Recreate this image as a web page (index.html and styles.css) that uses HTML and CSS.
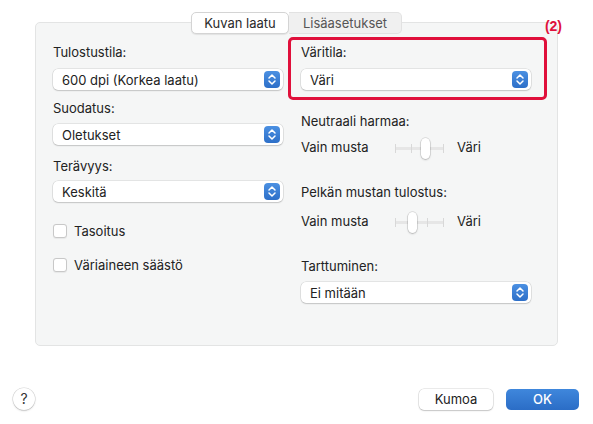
FILE: index.html
```html
<!DOCTYPE html>
<html lang="fi">
<head>
<meta charset="utf-8">
<link rel="stylesheet" href="styles.css">
</head>
<body>
<div class="dialog">
  <div class="tabs">
    <div class="tab active">Kuvan laatu</div>
    <div class="tab">Lisäasetukset</div>
  </div>
  <div class="panel">
    <div class="col left">
      <div class="label first">Tulostustila:</div>
      <div class="select s1"><span>600 dpi (Korkea laatu)</span><span class="stepper"><svg viewBox="0 0 16 17" width="16" height="17"><path d="M5 7 L8 4 L11 7 M5 10 L8 13 L11 10" fill="none" stroke="#fff" stroke-width="1.5" stroke-linecap="round" stroke-linejoin="round"/></svg></span></div>
      <div class="label l2">Suodatus:</div>
      <div class="select s2"><span>Oletukset</span><span class="stepper"><svg viewBox="0 0 16 17" width="16" height="17"><path d="M5 7 L8 4 L11 7 M5 10 L8 13 L11 10" fill="none" stroke="#fff" stroke-width="1.5" stroke-linecap="round" stroke-linejoin="round"/></svg></span></div>
      <div class="label l3">Terävyys:</div>
      <div class="select s3"><span>Keskitä</span><span class="stepper"><svg viewBox="0 0 16 17" width="16" height="17"><path d="M5 7 L8 4 L11 7 M5 10 L8 13 L11 10" fill="none" stroke="#fff" stroke-width="1.5" stroke-linecap="round" stroke-linejoin="round"/></svg></span></div>
      <label class="check c1"><span class="box"></span>Tasoitus</label>
      <label class="check c2"><span class="box"></span>Väriaineen säästö</label>
    </div>
    <div class="col right">
      <div class="highlight">
        <div class="label">Väritila:</div>
        <div class="select s1"><span>Väri</span><span class="stepper"><svg viewBox="0 0 16 17" width="16" height="17"><path d="M5 7 L8 4 L11 7 M5 10 L8 13 L11 10" fill="none" stroke="#fff" stroke-width="1.5" stroke-linecap="round" stroke-linejoin="round"/></svg></span></div>
        <div class="note">(2)</div>
      </div>
      <div class="label r2">Neutraali harmaa:</div>
      <div class="slider-row r3">
        <span class="end-l">Vain musta</span>
        <span class="slider"><span class="track"></span><span class="tick t0"></span><span class="tick t1"></span><span class="tick t2"></span><span class="tick t3"></span><span class="knob k2"></span></span>
        <span class="end-r">Väri</span>
      </div>
      <div class="label r4">Pelkän mustan tulostus:</div>
      <div class="slider-row r5">
        <span class="end-l">Vain musta</span>
        <span class="slider"><span class="track"></span><span class="tick t0"></span><span class="tick t1"></span><span class="tick t2"></span><span class="tick t3"></span><span class="knob k1"></span></span>
        <span class="end-r">Väri</span>
      </div>
      <div class="label r6">Tarttuminen:</div>
      <div class="select s6"><span>Ei mitään</span><span class="stepper"><svg viewBox="0 0 16 17" width="16" height="17"><path d="M5 7 L8 4 L11 7 M5 10 L8 13 L11 10" fill="none" stroke="#fff" stroke-width="1.5" stroke-linecap="round" stroke-linejoin="round"/></svg></span></div>
    </div>
  </div>
  <div class="footer">
    <div class="help">?</div>
    <div class="buttons">
      <div class="btn cancel">Kumoa</div>
      <div class="btn ok">OK</div>
    </div>
  </div>
</div>
</body>
</html>
```

FILE: styles.css
```css
* { box-sizing: border-box; }
html, body { margin: 0; padding: 0; background: #fff; }
body {
  font-family: Inter, "Noto Sans", sans-serif;
  font-size: 13px;
  color: #222;
  width: 593px;
  height: 424px;
  overflow: hidden;
}
.dialog { display: flex; flex-direction: column; }
.tabs {
  display: flex;
  justify-content: center;
  margin-top: 12px;
  height: 22px;
  position: relative;
  z-index: 2;
}
.tab {
  height: 22px;
  line-height: 21px;
  padding: 0 12px;
  font-size: 13px;
  color: #2a2a2a;
  background: #f0f0f0;
  border: 1px solid #e2e2e2;
  border-left: none;
  border-radius: 0 5px 5px 0;
}
.tab.active {
  width: 98px;
  text-align: center;
  background: #fff;
  border: 1px solid #d4d4d4;
  border-radius: 5px;
  box-shadow: 0 1px 1px rgba(0,0,0,.08);
}
.tab:not(.active) { width: 113px; text-align: center; color: #555; }
.panel {
  margin: -12px 35px 0 35px;
  height: 324px;
  background: #f5f6f6;
  border: 1px solid #e3e4e4;
  border-radius: 5px;
  display: flex;
  padding: 21px 0 0 17px;
}
.col { display: flex; flex-direction: column; }
.left { width: 230px; }
.right { width: 230px; margin-left: 18px; }
.label { height: 16px; line-height: 16px; white-space: nowrap; }
.select {
  height: 21px;
  background: #fff;
  border-radius: 5px;
  box-shadow: 0 0 0 0.5px rgba(0,0,0,.14), 0 1px 1.5px rgba(0,0,0,.14);
  display: flex;
  align-items: center;
  justify-content: space-between;
  padding: 0 3px 0 9px;
  white-space: nowrap;
}
.stepper {
  width: 16px;
  height: 17px;
  border-radius: 4px;
  background: linear-gradient(#4b90e2, #2d6fc8);
  display: flex;
}
.s1 { margin-top: 9px; }
.l2 { margin-top: 10px; }
.s2 { margin-top: 8px; }
.l3 { margin-top: 13px; }
.s3 { margin-top: 7px; }
.check { display: flex; align-items: center; height: 16px; }
.c1 { margin-top: 21px; }
.c2 { margin-top: 18px; }
.box {
  width: 14px;
  height: 14px;
  background: #fff;
  border: 1px solid #c8c8c8;
  border-radius: 3px;
  margin-right: 7px;
  box-shadow: 0 0.5px 1px rgba(0,0,0,.06);
}
.highlight {
  position: relative;
  margin: -7px 0 0 -13px;
  width: 259px;
  border: 3px solid #e0103b;
  border-radius: 5px;
  padding: 4px 13px 7px 10px;
}
.note {
  position: absolute;
  right: -18px;
  top: -22px;
  color: #e0103b;
  font-weight: 700;
  font-size: 14px;
  font-family: "Liberation Sans", Arial, sans-serif;
}
.r2 { margin-top: 13px; }
.slider-row { display: flex; align-items: center; height: 22px; white-space: nowrap; }
.r3 { margin-top: 7px; }
.r4 { margin-top: 26px; }
.r5 { margin-top: 10px; }
.r6 { margin-top: 26px; }
.s6 { margin-top: 8px; }
.end-l { width: 94px; }
.end-r { margin-left: 13px; }
.slider { position: relative; width: 49px; height: 22px; margin-top: 3px; }
.track {
  position: absolute;
  left: 0; right: 0; top: 9px;
  height: 3px;
  background: #e6e6e6;
  border-radius: 1px;
}
.tick { position: absolute; top: 6px; width: 1px; height: 9px; background: #d8d8d8; }
.t0 { left: 0; } .t1 { left: 16px; } .t2 { left: 32px; } .t3 { left: 48px; }
.knob {
  position: absolute;
  top: 0;
  width: 9px;
  height: 21px;
  background: #fff;
  border-radius: 5px;
  box-shadow: 0 0 0 0.5px rgba(0,0,0,.18), 0 1px 2px rgba(0,0,0,.2);
}
.k2 { left: 26px; }
.k1 { left: 13px; }
.footer {
  display: flex;
  justify-content: space-between;
  align-items: center;
  margin-top: 42px;
  padding: 0 14px 0 13px;
}
.help {
  width: 22px;
  height: 22px;
  border-radius: 50%;
  background: #fff;
  box-shadow: 0 0 0 0.5px rgba(0,0,0,.16), 0 1px 2px rgba(0,0,0,.16);
  text-align: center;
  line-height: 22px;
  font-size: 14px;
  color: #333;
}
.buttons { display: flex; gap: 13px; }
.btn {
  height: 21px;
  line-height: 21px;
  border-radius: 5px;
  text-align: center;
  font-size: 13px;
}
.cancel {
  width: 74px;
  background: #fff;
  box-shadow: 0 0 0 0.5px rgba(0,0,0,.16), 0 1px 1.5px rgba(0,0,0,.16);
}
.ok {
  width: 73px;
  background: linear-gradient(#3f87dc, #2b6dc6);
  color: #fff;
  font-weight: 500;
}
```
